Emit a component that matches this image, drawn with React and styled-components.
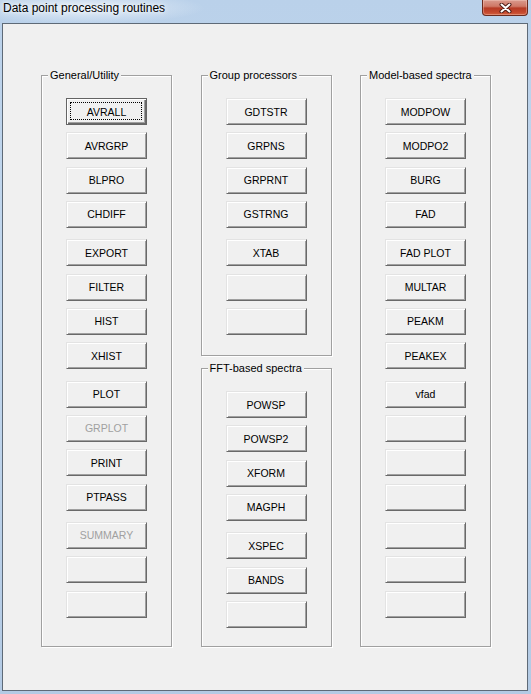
import React from 'react';
import styled, { createGlobalStyle, css } from 'styled-components';

const GlobalStyle = createGlobalStyle`
  html, body { margin: 0; padding: 0; background: #b9d1ea; overflow: hidden; }
  body { font-family: "Liberation Sans", Arial, sans-serif; }
  * { box-sizing: border-box; }
`;

const Window = styled.div`
  width: 531px;
  height: 694px;
  display: flex;
  flex-direction: column;
  background: linear-gradient(180deg, #bad1ea 0%, #c3d8ee 45%, #b3cae4 100%);
  overflow: hidden;
`;

const TitleBar = styled.div`
  height: 23px;
  flex: none;
  display: flex;
  align-items: flex-start;
  justify-content: space-between;
  padding: 0 3px 0 3px;
  background: radial-gradient(ellipse 120px 16px at 85px 8px, rgba(236, 243, 250, 0.85), rgba(236, 243, 250, 0) 100%);
`;

const Title = styled.span`
  font-family: "Liberation Sans", Arial, sans-serif;
  font-size: 12px;
  line-height: 15px;
  padding-top: 1px;
  color: #000;
  text-shadow: 0 0 6px #f4f8fc, 0 0 3px #f4f8fc;
`;

const CloseButton = styled.div`
  width: 46px;
  height: 16px;
  display: flex;
  align-items: center;
  justify-content: center;
  border: 1px solid #6a2a1e;
  border-top: none;
  border-radius: 0 0 4px 4px;
  background: linear-gradient(180deg, #d99a8d 0%, #cf7866 42%, #b63b25 54%, #c4472d 80%, #d2603f 100%);
  box-shadow: inset 0 0 0 1px rgba(255, 220, 210, 0.35);
`;

const ClientArea = styled.div`
  flex: 1;
  margin: 0 3px 3px 2px;
  border: 1px solid #5e6a77;
  background: #f0f0f0;
  padding: 51px 0 0 38px;
`;

const Columns = styled.div`
  display: grid;
  grid-template-columns: repeat(3, 131px);
  column-gap: 28.5px;
  align-items: start;
`;

const Stack = styled.div`
  display: flex;
  flex-direction: column;
  gap: 12px;
`;

const GroupBox = styled.div`
  height: ${(p) => p.$h}px;
  border: 1px solid #a0a0a0;
  box-shadow: inset 1px 1px 0 #ffffff, 1px 1px 0 #ffffff;
`;

const Legend = styled.div`
  width: fit-content;
  margin: -7px 0 0 6px;
  padding: 0 2px;
  background: #f0f0f0;
  font-size: 11px;
  line-height: 13px;
  color: #000;
  white-space: nowrap;
`;

const ButtonList = styled.div`
  display: flex;
  flex-direction: column;
  align-items: center;
  gap: 11.3px;
  margin-top: 16px;
`;

const Block = styled.div`
  display: flex;
  flex-direction: column;
  gap: 7.33px;
`;

const Button = styled.button`
  position: relative;
  width: 81px;
  height: 27px;
  padding: 0;
  margin: 0;
  font-family: "Liberation Sans", Arial, sans-serif;
  font-size: 10.5px;
  color: ${(p) => (p.disabled ? '#a0a0a0' : '#000')};
  background: #f0f0f0;
  border: 1px solid;
  border-color: #e3e3e3 #696969 #696969 #e3e3e3;
  box-shadow: inset 1px 1px 0 #ffffff, inset -1px -1px 0 #a0a0a0;
  outline: none;
  ${(p) =>
    p.$focused &&
    css`
      border-color: #646464;
      box-shadow: inset 1px 1px 0 #ffffff, inset -1px -1px 0 #696969, inset -2px -2px 0 #a0a0a0;
      &::after {
        content: '';
        position: absolute;
        inset: 3px 4px 4px 3px;
        border: 1px dotted #000;
      }
    `}
`;

const columns = [
  [
    {
      title: 'General/Utility',
      h: 572,
      blocks: [
        [{ t: 'AVRALL', f: true }, { t: 'AVRGRP' }, { t: 'BLPRO' }, { t: 'CHDIFF' }],
        [{ t: 'EXPORT' }, { t: 'FILTER' }, { t: 'HIST' }, { t: 'XHIST' }],
        [{ t: 'PLOT' }, { t: 'GRPLOT', d: true }, { t: 'PRINT' }, { t: 'PTPASS' }],
        [{ t: 'SUMMARY', d: true }, { t: '' }, { t: '' }],
      ],
    },
  ],
  [
    {
      title: 'Group processors',
      h: 281,
      blocks: [
        [{ t: 'GDTSTR' }, { t: 'GRPNS' }, { t: 'GRPRNT' }, { t: 'GSTRNG' }],
        [{ t: 'XTAB' }, { t: '' }, { t: '' }],
      ],
    },
    {
      title: 'FFT-based spectra',
      h: 279,
      blocks: [
        [{ t: 'POWSP' }, { t: 'POWSP2' }, { t: 'XFORM' }, { t: 'MAGPH' }],
        [{ t: 'XSPEC' }, { t: 'BANDS' }, { t: '' }],
      ],
    },
  ],
  [
    {
      title: 'Model-based spectra',
      h: 572,
      blocks: [
        [{ t: 'MODPOW' }, { t: 'MODPO2' }, { t: 'BURG' }, { t: 'FAD' }],
        [{ t: 'FAD PLOT' }, { t: 'MULTAR' }, { t: 'PEAKM' }, { t: 'PEAKEX' }],
        [{ t: 'vfad' }, { t: '' }, { t: '' }, { t: '' }],
        [{ t: '' }, { t: '' }, { t: '' }],
      ],
    },
  ],
];

function CloseIcon() {
  return (
    <svg width="13" height="10" viewBox="0 0 13 10">
      <path d="M2.5 1.5 L10.5 8.5 M10.5 1.5 L2.5 8.5" stroke="#4a1a14" strokeWidth="4" strokeLinecap="round" />
      <path d="M2.5 1.5 L10.5 8.5 M10.5 1.5 L2.5 8.5" stroke="#ffffff" strokeWidth="2" strokeLinecap="round" />
    </svg>
  );
}

export default function App() {
  return (
    <>
      <GlobalStyle />
      <Window>
        <TitleBar>
          <Title>Data point processing routines</Title>
          <CloseButton>
            <CloseIcon />
          </CloseButton>
        </TitleBar>
        <ClientArea>
          <Columns>
            {columns.map((col, ci) => (
              <Stack key={ci}>
                {col.map((g) => (
                  <GroupBox key={g.title} $h={g.h}>
                    <Legend>{g.title}</Legend>
                    <ButtonList>
                      {g.blocks.map((b, bi) => (
                        <Block key={bi}>
                          {b.map((btn, i) => (
                            <Button key={i} $focused={btn.f} disabled={btn.d}>
                              {btn.t}
                            </Button>
                          ))}
                        </Block>
                      ))}
                    </ButtonList>
                  </GroupBox>
                ))}
              </Stack>
            ))}
          </Columns>
        </ClientArea>
      </Window>
    </>
  );
}
